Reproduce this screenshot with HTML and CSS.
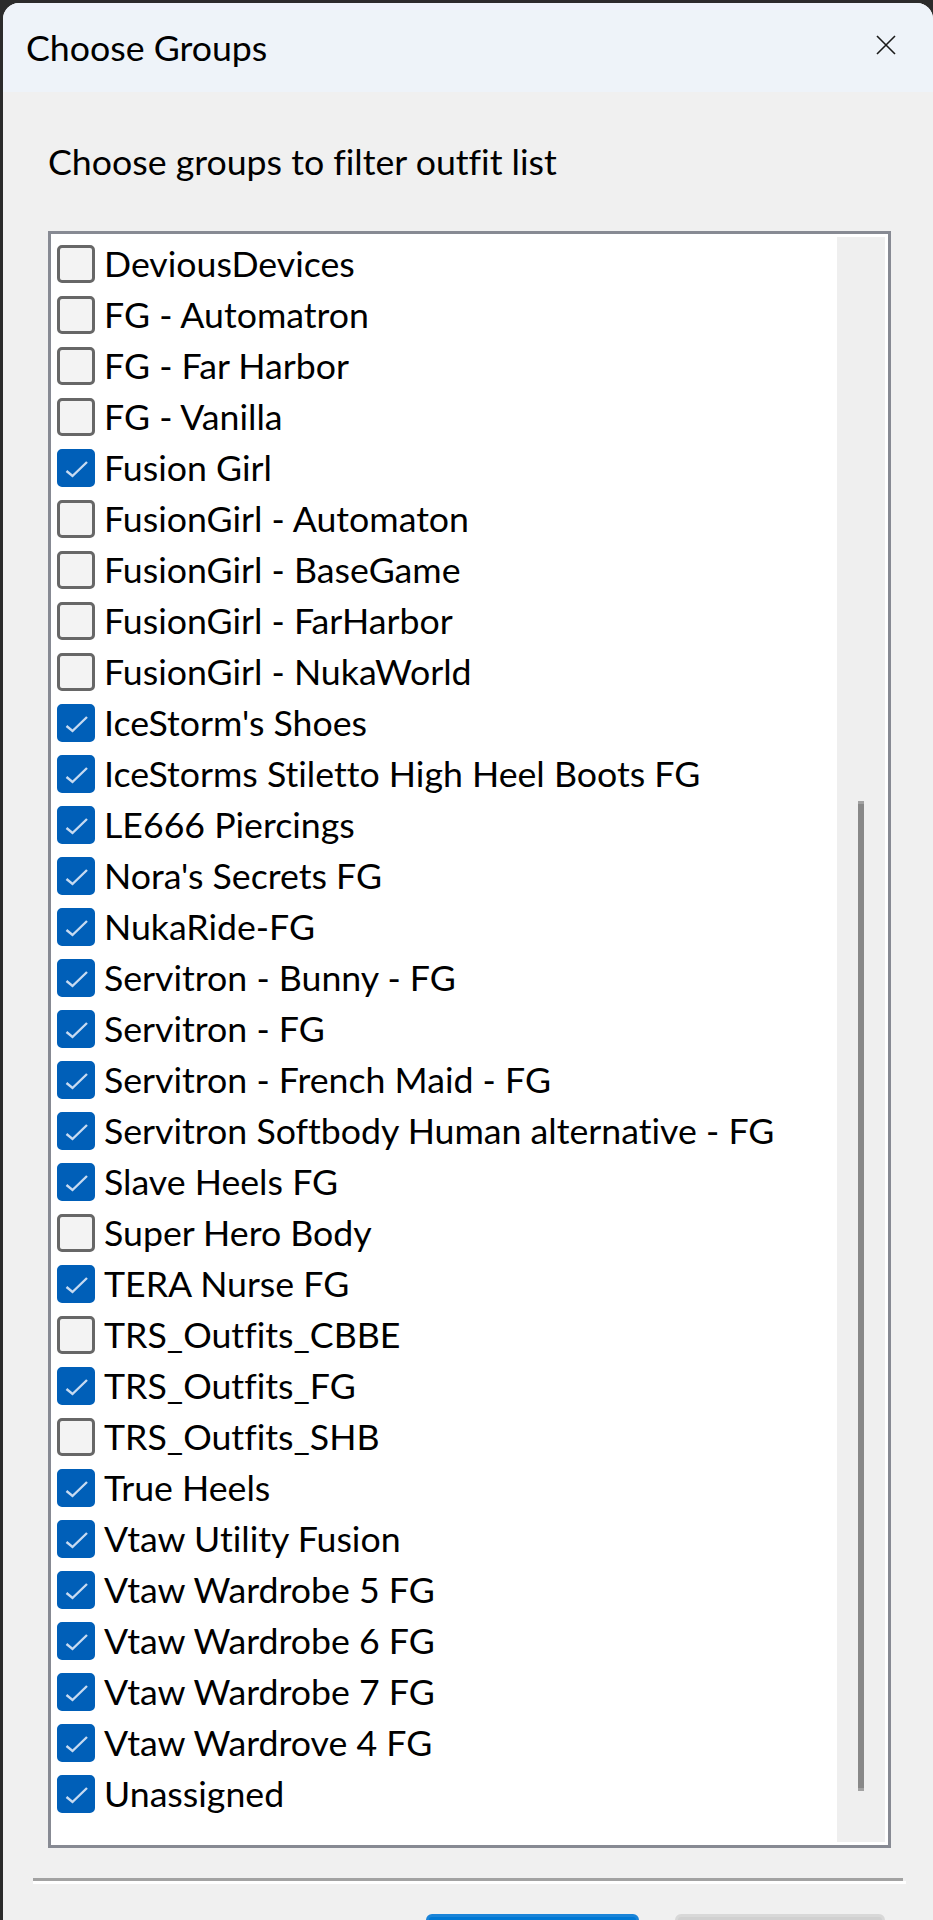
FILE: index.html
```html
<!DOCTYPE html>
<html lang="en">
<head>
<meta charset="utf-8">
<title>Choose Groups</title>
<link rel="stylesheet" href="styles.css">
</head>
<body>
<div class="window">
  <div class="titlebar">
    <span class="title">Choose Groups</span>
    <span class="close">
      <svg viewBox="0 0 20 20" width="20" height="20"><path d="M1 1 L19 19 M19 1 L1 19" stroke="#1a1a1a" stroke-width="1.6" fill="none"/></svg>
    </span>
  </div>
  <div class="content">
    <div class="prompt">Choose groups to filter outfit list</div>
    <div class="listbox">
      <div class="items">
        <div class="row"><span class="cb"></span><span class="label">DeviousDevices</span></div>
        <div class="row"><span class="cb"></span><span class="label">FG - Automatron</span></div>
        <div class="row"><span class="cb"></span><span class="label">FG - Far Harbor</span></div>
        <div class="row"><span class="cb"></span><span class="label">FG - Vanilla</span></div>
        <div class="row"><span class="cb on"><svg viewBox="0 0 38 38"><path d="M9.5 22 L15.5 27 L30 13"/></svg></span><span class="label">Fusion Girl</span></div>
        <div class="row"><span class="cb"></span><span class="label">FusionGirl - Automaton</span></div>
        <div class="row"><span class="cb"></span><span class="label">FusionGirl - BaseGame</span></div>
        <div class="row"><span class="cb"></span><span class="label">FusionGirl - FarHarbor</span></div>
        <div class="row"><span class="cb"></span><span class="label">FusionGirl - NukaWorld</span></div>
        <div class="row"><span class="cb on"><svg viewBox="0 0 38 38"><path d="M9.5 22 L15.5 27 L30 13"/></svg></span><span class="label">IceStorm's Shoes</span></div>
        <div class="row"><span class="cb on"><svg viewBox="0 0 38 38"><path d="M9.5 22 L15.5 27 L30 13"/></svg></span><span class="label">IceStorms Stiletto High Heel Boots FG</span></div>
        <div class="row"><span class="cb on"><svg viewBox="0 0 38 38"><path d="M9.5 22 L15.5 27 L30 13"/></svg></span><span class="label">LE666 Piercings</span></div>
        <div class="row"><span class="cb on"><svg viewBox="0 0 38 38"><path d="M9.5 22 L15.5 27 L30 13"/></svg></span><span class="label">Nora's Secrets FG</span></div>
        <div class="row"><span class="cb on"><svg viewBox="0 0 38 38"><path d="M9.5 22 L15.5 27 L30 13"/></svg></span><span class="label">NukaRide-FG</span></div>
        <div class="row"><span class="cb on"><svg viewBox="0 0 38 38"><path d="M9.5 22 L15.5 27 L30 13"/></svg></span><span class="label">Servitron - Bunny - FG</span></div>
        <div class="row"><span class="cb on"><svg viewBox="0 0 38 38"><path d="M9.5 22 L15.5 27 L30 13"/></svg></span><span class="label">Servitron - FG</span></div>
        <div class="row"><span class="cb on"><svg viewBox="0 0 38 38"><path d="M9.5 22 L15.5 27 L30 13"/></svg></span><span class="label">Servitron - French Maid - FG</span></div>
        <div class="row"><span class="cb on"><svg viewBox="0 0 38 38"><path d="M9.5 22 L15.5 27 L30 13"/></svg></span><span class="label">Servitron Softbody Human alternative - FG</span></div>
        <div class="row"><span class="cb on"><svg viewBox="0 0 38 38"><path d="M9.5 22 L15.5 27 L30 13"/></svg></span><span class="label">Slave Heels FG</span></div>
        <div class="row"><span class="cb"></span><span class="label">Super Hero Body</span></div>
        <div class="row"><span class="cb on"><svg viewBox="0 0 38 38"><path d="M9.5 22 L15.5 27 L30 13"/></svg></span><span class="label">TERA Nurse FG</span></div>
        <div class="row"><span class="cb"></span><span class="label">TRS_Outfits_CBBE</span></div>
        <div class="row"><span class="cb on"><svg viewBox="0 0 38 38"><path d="M9.5 22 L15.5 27 L30 13"/></svg></span><span class="label">TRS_Outfits_FG</span></div>
        <div class="row"><span class="cb"></span><span class="label">TRS_Outfits_SHB</span></div>
        <div class="row"><span class="cb on"><svg viewBox="0 0 38 38"><path d="M9.5 22 L15.5 27 L30 13"/></svg></span><span class="label">True Heels</span></div>
        <div class="row"><span class="cb on"><svg viewBox="0 0 38 38"><path d="M9.5 22 L15.5 27 L30 13"/></svg></span><span class="label">Vtaw Utility Fusion</span></div>
        <div class="row"><span class="cb on"><svg viewBox="0 0 38 38"><path d="M9.5 22 L15.5 27 L30 13"/></svg></span><span class="label">Vtaw Wardrobe 5 FG</span></div>
        <div class="row"><span class="cb on"><svg viewBox="0 0 38 38"><path d="M9.5 22 L15.5 27 L30 13"/></svg></span><span class="label">Vtaw Wardrobe 6 FG</span></div>
        <div class="row"><span class="cb on"><svg viewBox="0 0 38 38"><path d="M9.5 22 L15.5 27 L30 13"/></svg></span><span class="label">Vtaw Wardrobe 7 FG</span></div>
        <div class="row"><span class="cb on"><svg viewBox="0 0 38 38"><path d="M9.5 22 L15.5 27 L30 13"/></svg></span><span class="label">Vtaw Wardrove 4 FG</span></div>
        <div class="row"><span class="cb on"><svg viewBox="0 0 38 38"><path d="M9.5 22 L15.5 27 L30 13"/></svg></span><span class="label">Unassigned</span></div>
      </div>
      <div class="track"><div class="thumb"></div></div>
    </div>
    <div class="separator"></div>
    <div class="buttons">
      <div class="btn primary"></div>
      <div class="btn secondary"></div>
    </div>
  </div>
</div>
</body>
</html>
```
FILE: styles.css
```css
html, body {
  margin: 0;
  padding: 0;
  background: #2b2b2b;
  height: 1920px;
  overflow: hidden;
}
body {
  font-family: "Lato", "Noto Sans", sans-serif;
  font-size: 35.7px;
  font-variant-ligatures: none;
  color: #000;
}
.window {
  margin: 3px 0 0 3px;
  width: 930px;
  height: 1960px;
  background: #f0f0f0;
  border-radius: 16px 16px 0 0;
  overflow: hidden;
}
.titlebar {
  height: 89px;
  background: #eef3f9;
  display: flex;
  align-items: center;
  padding-left: 23px;
}
.title {
  line-height: 89px;
  flex: 1;
}
.close {
  width: 20px;
  height: 20px;
  margin-right: 37px;
  margin-bottom: 5px;
  display: flex;
}
.content {
  padding: 44px 0 0 45px;
}
.prompt {
  line-height: 51px;
  height: 51px;
}
.listbox {
  margin-top: 44px;
  width: 831px;
  height: 1605px;
  border: 3px solid #878a93;
  background: #fff;
  padding: 3px;
  display: flex;
  box-sizing: content-box;
}
.items {
  flex: 1;
  padding-top: 1px;
}
.row {
  height: 51px;
  display: flex;
  align-items: center;
  padding-left: 3px;
  white-space: nowrap;
}
.cb {
  width: 38px;
  height: 38px;
  box-sizing: border-box;
  border: 3px solid #676767;
  border-radius: 5px;
  background: #f3f3f3;
  margin-right: 9px;
  flex: none;
  display: flex;
}
.cb.on {
  border-color: #005fb8;
  background: #005fb8;
}
.cb svg {
  width: 38px;
  height: 38px;
  margin: -3px;
  fill: none;
  stroke: #c6daf1;
  stroke-width: 2.4;
}
.label {
  line-height: 51px;
}
.track {
  width: 48px;
  background: #efefef;
  flex: none;
  display: flex;
  flex-direction: column;
}
.thumb {
  margin-top: 564px;
  margin-left: 21px;
  width: 6px;
  height: 984px;
  background: #888888;
  border-top: 3px solid #a2a2a2;
  border-bottom: 3px solid #a2a2a2;
}
.separator {
  margin: 30px 0 0 -15px;
  width: 870px;
  height: 3px;
  background: #a2a2a2;
  box-shadow: 3px 3px 0 #ffffff, 0 3px 0 #ffffff;
}
.buttons {
  display: flex;
  justify-content: flex-end;
  gap: 36px;
  margin-top: 33px;
  padding-right: 48px;
}
.btn {
  height: 60px;
  border-radius: 6px;
  box-sizing: border-box;
}
.primary {
  width: 213px;
  background: #0078d4;
  border: 3px solid #1a84d8;
}
.secondary {
  width: 210px;
  background: #d0d0d0;
  border: 3px solid #d8d8d8;
}
```
